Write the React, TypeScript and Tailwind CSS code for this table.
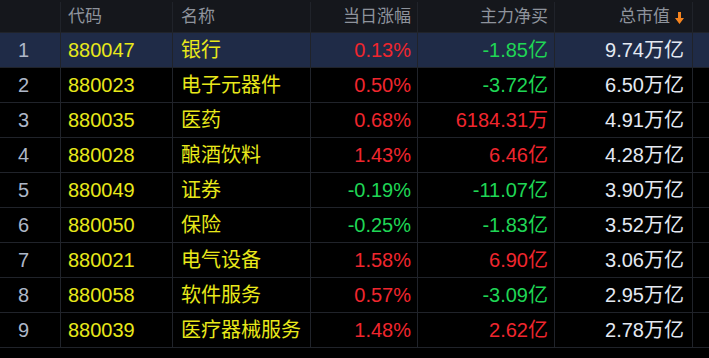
import React from "react";

type Row = {
  code: string;
  name: string;
  pct: string;
  net: string;
  cap: string;
};

const ROWS: Row[] = [
  { code: "880047", name: "银行", pct: "0.13%", net: "-1.85亿", cap: "9.74万亿" },
  { code: "880023", name: "电子元器件", pct: "0.50%", net: "-3.72亿", cap: "6.50万亿" },
  { code: "880035", name: "医药", pct: "0.68%", net: "6184.31万", cap: "4.91万亿" },
  { code: "880028", name: "酿酒饮料", pct: "1.43%", net: "6.46亿", cap: "4.28万亿" },
  { code: "880049", name: "证券", pct: "-0.19%", net: "-11.07亿", cap: "3.90万亿" },
  { code: "880050", name: "保险", pct: "-0.25%", net: "-1.83亿", cap: "3.52万亿" },
  { code: "880021", name: "电气设备", pct: "1.58%", net: "6.90亿", cap: "3.06万亿" },
  { code: "880058", name: "软件服务", pct: "0.57%", net: "-3.09亿", cap: "2.95万亿" },
  { code: "880039", name: "医疗器械服务", pct: "1.48%", net: "2.62亿", cap: "2.78万亿" },
];

const color = (v: string) => (v.startsWith("-") ? "text-[#1fd655]" : "text-[#f0262e]");

const grid = "grid grid-cols-[61px_112px_138px_107px_137px_138px_1fr]";
const cell = "border-r border-[#20232a] flex items-center";

export default function App() {
  return (
    <div
      className="h-[358px] w-[709px] overflow-hidden bg-black"
      style={{ fontFamily: '"Liberation Sans", "Noto Sans CJK SC", sans-serif' }}
    >
      <div className={`${grid} h-[33px] border-b border-[#20232a] bg-[#15171c] pt-[2px] text-[17px] text-[#8e939c]`}>
        <div className={cell} />
        <div className={`${cell} pl-[7px]`}>代码</div>
        <div className={`${cell} pl-[8px]`}>名称</div>
        <div className={`${cell} justify-end pr-[6px]`}>当日涨幅</div>
        <div className={`${cell} justify-end pr-[6px]`}>主力净买</div>
        <div className={`${cell} justify-end gap-[5px] pr-[8px]`}>
          总市值
          <svg width="9" height="12" viewBox="0 0 9 12" className="mt-[1px]">
            <path d="M3 0h3v6h3L4.5 12 0 6h3z" fill="#f5841f" />
          </svg>
        </div>
        <div />
      </div>
      {ROWS.map((r, i) => (
        <div
          key={r.code}
          className={`${grid} h-[35px] border-b border-[#20232a] text-[20px] ${i === 0 ? "bg-[#1f2b47]" : ""}`}
        >
          <div className={`${cell} pl-[18px] text-[#aeb7c8]`}>{i + 1}</div>
          <div className={`${cell} pl-[7px] text-[#e8e81a]`}>{r.code}</div>
          <div className={`${cell} pl-[8px] text-[#e8e81a]`}>{r.name}</div>
          <div className={`${cell} justify-end pr-[6px] ${color(r.pct)}`}>{r.pct}</div>
          <div className={`${cell} justify-end pr-[6px] ${color(r.net)}`}>{r.net}</div>
          <div className={`${cell} justify-end pr-[8px] text-[#e4e9f2]`}>{r.cap}</div>
          <div />
        </div>
      ))}
    </div>
  );
}
